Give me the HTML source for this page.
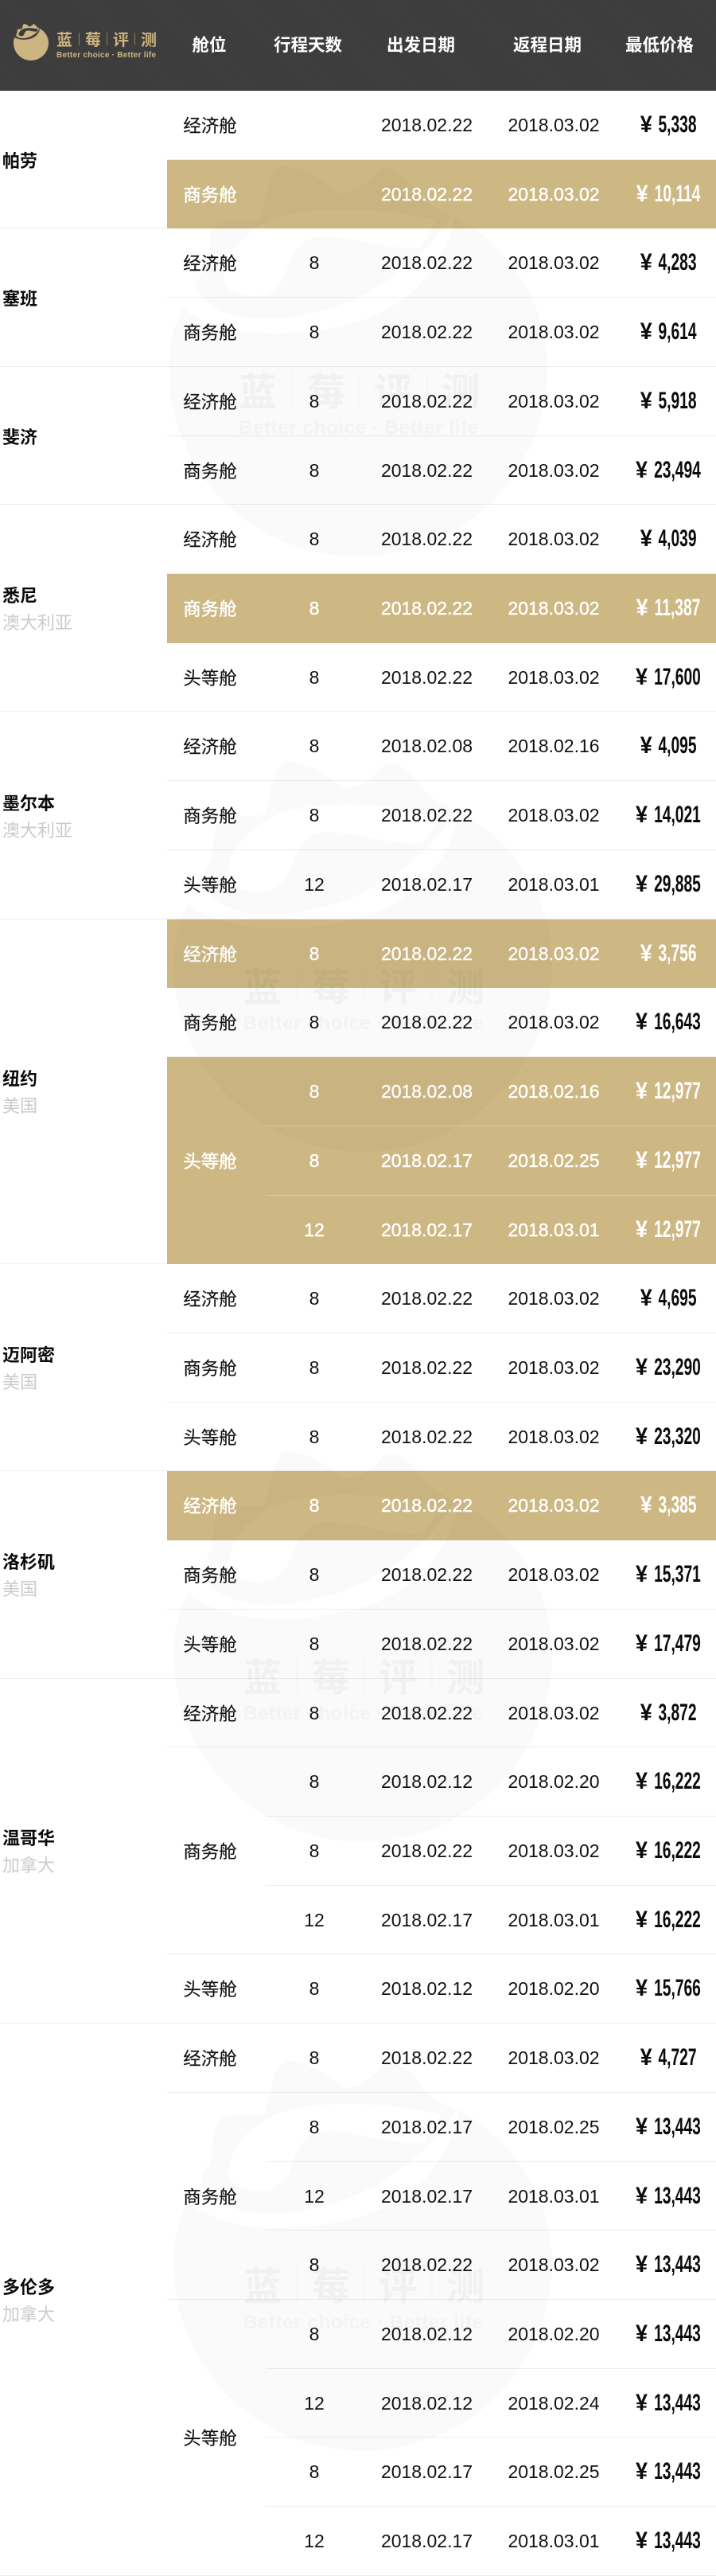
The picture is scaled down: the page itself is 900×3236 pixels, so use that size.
<!DOCTYPE html>
<html lang="zh"><head><meta charset="utf-8"><title>蓝莓评测</title>
<style>
*{margin:0;padding:0;box-sizing:border-box}
html,body{width:900px;height:3236px;background:#fff;overflow:hidden}
body{position:relative;font-family:"Liberation Sans","Noto Sans CJK SC",sans-serif;color:#111}
header{position:absolute;left:0;top:0;width:900px;height:114px;background-color:#3d3c3c;background-image:repeating-linear-gradient(45deg,rgba(255,255,255,.018) 0 1px,rgba(0,0,0,.03) 1px 2px);color:#fff;font-weight:700;font-size:21.5px;--gap:#3d3c3c}
header span{position:absolute;top:0;line-height:114px;width:120px;text-align:center}
#t{position:absolute;left:0;top:114px;width:900px}
.r{position:relative;height:86.72px;line-height:86.72px;font-size:23px;white-space:nowrap}
.r::before{content:"";position:absolute;left:210px;right:0;top:0;height:100%;background:#cdb884;display:none}
.y::before{display:block}
.r::after{content:"";position:absolute;left:210px;right:0;bottom:0;height:1px;background:#eeeeee}
.g::after{left:0}.n::after{left:334px}
.y::after{display:none}
.y.g::after{display:block;left:0;right:auto;width:210px}
.y.n::after{display:block;left:334px;right:0;width:auto;background:rgba(255,255,255,.28)}
.r>span,.r>b{position:absolute;top:0;text-align:center;font-weight:400}
.y>span,.y>b,.yt{color:#fff;-webkit-text-stroke:.45px #fff}
.c{left:204px;width:120px;font-size:22.5px;font-family:"Noto Sans CJK SC","Liberation Sans",sans-serif;-webkit-text-stroke:.15px #111}
.d{left:355px;width:80px}
.a{left:466.5px;width:140px}
.e{left:626px;width:140px}
.r>b.p{left:640px;width:400px;font-weight:700;font-size:30px;transform:scaleX(.64);-webkit-text-stroke:0;color:#0b0b0b}
.y>b.p{color:#fff}
.p i{display:inline-block;width:23.4px;margin-right:12.5px;font-style:normal;transform:scaleX(1.4)}
.city{position:absolute;left:3px;top:0;font-size:22px;line-height:34px;display:flex;flex-direction:column;justify-content:center;font-family:"Noto Sans CJK SC","Liberation Sans",sans-serif;font-weight:700;color:#0b0b0b;z-index:2}
.city small{font-size:22px;font-weight:400;color:#cbcbcb}
.wm{position:absolute;width:476px;height:492px;mix-blend-mode:multiply;--gap:#fff;pointer-events:none}
.wt{font-family:"Noto Sans CJK SC",sans-serif;font-weight:700;font-size:48px;fill:#f1f1f1;text-anchor:middle}
.wb{font-family:"Liberation Sans",sans-serif;font-weight:700;font-size:24px;fill:#f3f3f3}
</style></head><body>

<svg width="0" height="0" style="position:absolute"><defs>
<symbol id="berry" viewBox="55 80 1425 1450" preserveAspectRatio="none">
<path fill="currentColor" d="M470 85C540 80 640 130 690 185C730 190 800 160 850 95C900 80 960 130 1000 195C1040 230 1080 255 1130 270C1340 380 1480 600 1480 830C1480 1230 1150 1530 770 1530C370 1530 55 1220 55 830C55 740 75 670 110 610L150 540C165 500 190 470 200 440C205 380 205 320 240 295C290 275 350 295 400 280C420 210 430 120 470 85Z"/>
<path fill="var(--gap)" d="M110 610C130 560 145 540 160 530C200 620 320 660 460 650C720 630 960 500 1110 280L1130 270C1090 470 960 590 800 650C620 710 400 720 260 680C190 660 140 640 110 610Z"/>
<path fill="var(--gap)" d="M262 500C265 400 360 300 500 265C680 225 900 250 1060 285C1030 340 1010 375 1000 385C900 400 760 350 640 345C560 345 520 400 500 470C470 550 420 575 350 565C300 555 262 540 262 500Z"/>
</symbol></defs></svg>

<header>
<svg style="position:absolute;left:17px;top:30px;color:#cdb581" width="44" height="46"><use href="#berry" width="44" height="46"/></svg>
<svg style="position:absolute;left:60px;top:30px" width="150" height="50" viewBox="60 30 150 50">
<g font-family="'Noto Sans CJK SC',sans-serif" font-weight="700" font-size="20" fill="#cdb581" text-anchor="middle">
<text x="81" y="57">蓝</text><text x="117" y="57">莓</text><text x="152" y="57">评</text><text x="187" y="57">测</text></g>
<path d="M99.500 41V57M134.500 41V57M169.500 41V57" stroke="#8d7e5c" stroke-width="1"/>
<text x="71" y="72" font-family="'Liberation Sans',sans-serif" font-weight="700" font-size="10" fill="#cdb581" textLength="125">Better choice · Better life</text>
</svg>
<span style="left:203px">舱位</span><span style="left:327px">行程天数</span><span style="left:469px">出发日期</span><span style="left:628px">返程日期</span><span style="left:769px">最低价格</span>
</header>

<div id="t">
<div class="r"><div class="city" style="height:173.44px">帕劳</div><span class="c">经济舱</span><span class="a">2018.02.22</span><span class="e">2018.03.02</span><b class="p"><i>¥</i>5,338</b></div>
<div class="r y g"><span class="c">商务舱</span><span class="a">2018.02.22</span><span class="e">2018.03.02</span><b class="p"><i>¥</i>10,114</b></div>
<div class="r"><div class="city" style="height:173.44px">塞班</div><span class="c">经济舱</span><span class="d">8</span><span class="a">2018.02.22</span><span class="e">2018.03.02</span><b class="p"><i>¥</i>4,283</b></div>
<div class="r g"><span class="c">商务舱</span><span class="d">8</span><span class="a">2018.02.22</span><span class="e">2018.03.02</span><b class="p"><i>¥</i>9,614</b></div>
<div class="r"><div class="city" style="height:173.44px">斐济</div><span class="c">经济舱</span><span class="d">8</span><span class="a">2018.02.22</span><span class="e">2018.03.02</span><b class="p"><i>¥</i>5,918</b></div>
<div class="r g"><span class="c">商务舱</span><span class="d">8</span><span class="a">2018.02.22</span><span class="e">2018.03.02</span><b class="p"><i>¥</i>23,494</b></div>
<div class="r"><div class="city" style="height:260.16px">悉尼<small>澳大利亚</small></div><span class="c">经济舱</span><span class="d">8</span><span class="a">2018.02.22</span><span class="e">2018.03.02</span><b class="p"><i>¥</i>4,039</b></div>
<div class="r y"><span class="c">商务舱</span><span class="d">8</span><span class="a">2018.02.22</span><span class="e">2018.03.02</span><b class="p"><i>¥</i>11,387</b></div>
<div class="r g"><span class="c">头等舱</span><span class="d">8</span><span class="a">2018.02.22</span><span class="e">2018.03.02</span><b class="p"><i>¥</i>17,600</b></div>
<div class="r"><div class="city" style="height:260.16px">墨尔本<small>澳大利亚</small></div><span class="c">经济舱</span><span class="d">8</span><span class="a">2018.02.08</span><span class="e">2018.02.16</span><b class="p"><i>¥</i>4,095</b></div>
<div class="r"><span class="c">商务舱</span><span class="d">8</span><span class="a">2018.02.22</span><span class="e">2018.03.02</span><b class="p"><i>¥</i>14,021</b></div>
<div class="r g"><span class="c">头等舱</span><span class="d">12</span><span class="a">2018.02.17</span><span class="e">2018.03.01</span><b class="p"><i>¥</i>29,885</b></div>
<div class="r y"><div class="city" style="height:433.6px;-webkit-text-stroke:0">纽约<small>美国</small></div><span class="c">经济舱</span><span class="d">8</span><span class="a">2018.02.22</span><span class="e">2018.03.02</span><b class="p"><i>¥</i>3,756</b></div>
<div class="r"><span class="c">商务舱</span><span class="d">8</span><span class="a">2018.02.22</span><span class="e">2018.03.02</span><b class="p"><i>¥</i>16,643</b></div>
<div class="r y n"><span class="c" style="line-height:260.16px;z-index:1">头等舱</span><span class="d">8</span><span class="a">2018.02.08</span><span class="e">2018.02.16</span><b class="p"><i>¥</i>12,977</b></div>
<div class="r y n"><span class="d">8</span><span class="a">2018.02.17</span><span class="e">2018.02.25</span><b class="p"><i>¥</i>12,977</b></div>
<div class="r y g"><span class="d">12</span><span class="a">2018.02.17</span><span class="e">2018.03.01</span><b class="p"><i>¥</i>12,977</b></div>
<div class="r"><div class="city" style="height:260.16px">迈阿密<small>美国</small></div><span class="c">经济舱</span><span class="d">8</span><span class="a">2018.02.22</span><span class="e">2018.03.02</span><b class="p"><i>¥</i>4,695</b></div>
<div class="r"><span class="c">商务舱</span><span class="d">8</span><span class="a">2018.02.22</span><span class="e">2018.03.02</span><b class="p"><i>¥</i>23,290</b></div>
<div class="r g"><span class="c">头等舱</span><span class="d">8</span><span class="a">2018.02.22</span><span class="e">2018.03.02</span><b class="p"><i>¥</i>23,320</b></div>
<div class="r y"><div class="city" style="height:260.16px;-webkit-text-stroke:0">洛杉矶<small>美国</small></div><span class="c">经济舱</span><span class="d">8</span><span class="a">2018.02.22</span><span class="e">2018.03.02</span><b class="p"><i>¥</i>3,385</b></div>
<div class="r"><span class="c">商务舱</span><span class="d">8</span><span class="a">2018.02.22</span><span class="e">2018.03.02</span><b class="p"><i>¥</i>15,371</b></div>
<div class="r g"><span class="c">头等舱</span><span class="d">8</span><span class="a">2018.02.22</span><span class="e">2018.03.02</span><b class="p"><i>¥</i>17,479</b></div>
<div class="r"><div class="city" style="height:433.6px">温哥华<small>加拿大</small></div><span class="c">经济舱</span><span class="d">8</span><span class="a">2018.02.22</span><span class="e">2018.03.02</span><b class="p"><i>¥</i>3,872</b></div>
<div class="r n"><span class="c" style="line-height:260.16px">商务舱</span><span class="d">8</span><span class="a">2018.02.12</span><span class="e">2018.02.20</span><b class="p"><i>¥</i>16,222</b></div>
<div class="r n"><span class="d">8</span><span class="a">2018.02.22</span><span class="e">2018.03.02</span><b class="p"><i>¥</i>16,222</b></div>
<div class="r"><span class="d">12</span><span class="a">2018.02.17</span><span class="e">2018.03.01</span><b class="p"><i>¥</i>16,222</b></div>
<div class="r g"><span class="c">头等舱</span><span class="d">8</span><span class="a">2018.02.12</span><span class="e">2018.02.20</span><b class="p"><i>¥</i>15,766</b></div>
<div class="r"><div class="city" style="height:693.76px">多伦多<small>加拿大</small></div><span class="c">经济舱</span><span class="d">8</span><span class="a">2018.02.22</span><span class="e">2018.03.02</span><b class="p"><i>¥</i>4,727</b></div>
<div class="r n"><span class="c" style="line-height:260.16px">商务舱</span><span class="d">8</span><span class="a">2018.02.17</span><span class="e">2018.02.25</span><b class="p"><i>¥</i>13,443</b></div>
<div class="r n"><span class="d">12</span><span class="a">2018.02.17</span><span class="e">2018.03.01</span><b class="p"><i>¥</i>13,443</b></div>
<div class="r"><span class="d">8</span><span class="a">2018.02.22</span><span class="e">2018.03.02</span><b class="p"><i>¥</i>13,443</b></div>
<div class="r n"><span class="c" style="line-height:346.88px">头等舱</span><span class="d">8</span><span class="a">2018.02.12</span><span class="e">2018.02.20</span><b class="p"><i>¥</i>13,443</b></div>
<div class="r n"><span class="d">12</span><span class="a">2018.02.12</span><span class="e">2018.02.24</span><b class="p"><i>¥</i>13,443</b></div>
<div class="r n"><span class="d">8</span><span class="a">2018.02.17</span><span class="e">2018.02.25</span><b class="p"><i>¥</i>13,443</b></div>
<div class="r g"><span class="d">12</span><span class="a">2018.02.17</span><span class="e">2018.03.01</span><b class="p"><i>¥</i>13,443</b></div>
</div>

<svg class="wm" style="left:212px;top:207px;color:#fafafa" viewBox="0 0 476 492"><use href="#berry" width="476" height="492"/><text class="wt" x="112" y="302">蓝</text><text class="wt" x="198" y="302">莓</text><text class="wt" x="282" y="302">评</text><text class="wt" x="367" y="302">测</text><path d="M155 260V305M240 260V305M325 260V305" stroke="#f3f3f3"/><text class="wb" x="88" y="338" textLength="301">Better choice · Better life</text></svg>
<svg class="wm" style="left:218px;top:955px;color:#fafafa" viewBox="0 0 476 492"><use href="#berry" width="476" height="492"/><text class="wt" x="112" y="302">蓝</text><text class="wt" x="198" y="302">莓</text><text class="wt" x="282" y="302">评</text><text class="wt" x="367" y="302">测</text><path d="M155 260V305M240 260V305M325 260V305" stroke="#f3f3f3"/><text class="wb" x="88" y="338" textLength="301">Better choice · Better life</text></svg>
<svg class="wm" style="left:218px;top:1822px;color:#fafafa" viewBox="0 0 476 492"><use href="#berry" width="476" height="492"/><text class="wt" x="112" y="302">蓝</text><text class="wt" x="198" y="302">莓</text><text class="wt" x="282" y="302">评</text><text class="wt" x="367" y="302">测</text><path d="M155 260V305M240 260V305M325 260V305" stroke="#f3f3f3"/><text class="wb" x="88" y="338" textLength="301">Better choice · Better life</text></svg>
<svg class="wm" style="left:218px;top:2587px;color:#fafafa" viewBox="0 0 476 492"><use href="#berry" width="476" height="492"/><text class="wt" x="112" y="302">蓝</text><text class="wt" x="198" y="302">莓</text><text class="wt" x="282" y="302">评</text><text class="wt" x="367" y="302">测</text><path d="M155 260V305M240 260V305M325 260V305" stroke="#f3f3f3"/><text class="wb" x="88" y="338" textLength="301">Better choice · Better life</text></svg>
</body></html>
